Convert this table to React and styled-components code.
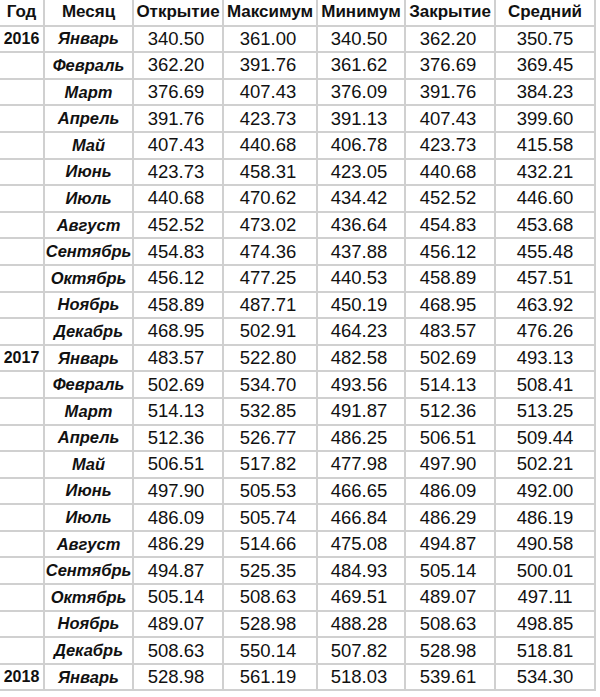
import React from "react";
import styled, { createGlobalStyle } from "styled-components";

const columns = ["Год", "Месяц", "Открытие", "Максимум", "Минимум", "Закрытие", "Средний"];

const rows = [
  ["2016", "Январь", "340.50", "361.00", "340.50", "362.20", "350.75"],
  ["", "Февраль", "362.20", "391.76", "361.62", "376.69", "369.45"],
  ["", "Март", "376.69", "407.43", "376.09", "391.76", "384.23"],
  ["", "Апрель", "391.76", "423.73", "391.13", "407.43", "399.60"],
  ["", "Май", "407.43", "440.68", "406.78", "423.73", "415.58"],
  ["", "Июнь", "423.73", "458.31", "423.05", "440.68", "432.21"],
  ["", "Июль", "440.68", "470.62", "434.42", "452.52", "446.60"],
  ["", "Август", "452.52", "473.02", "436.64", "454.83", "453.68"],
  ["", "Сентябрь", "454.83", "474.36", "437.88", "456.12", "455.48"],
  ["", "Октябрь", "456.12", "477.25", "440.53", "458.89", "457.51"],
  ["", "Ноябрь", "458.89", "487.71", "450.19", "468.95", "463.92"],
  ["", "Декабрь", "468.95", "502.91", "464.23", "483.57", "476.26"],
  ["2017", "Январь", "483.57", "522.80", "482.58", "502.69", "493.13"],
  ["", "Февраль", "502.69", "534.70", "493.56", "514.13", "508.41"],
  ["", "Март", "514.13", "532.85", "491.87", "512.36", "513.25"],
  ["", "Апрель", "512.36", "526.77", "486.25", "506.51", "509.44"],
  ["", "Май", "506.51", "517.82", "477.98", "497.90", "502.21"],
  ["", "Июнь", "497.90", "505.53", "466.65", "486.09", "492.00"],
  ["", "Июль", "486.09", "505.74", "466.84", "486.29", "486.19"],
  ["", "Август", "486.29", "514.66", "475.08", "494.87", "490.58"],
  ["", "Сентябрь", "494.87", "525.35", "484.93", "505.14", "500.01"],
  ["", "Октябрь", "505.14", "508.63", "469.51", "489.07", "497.11"],
  ["", "Ноябрь", "489.07", "528.98", "488.28", "508.63", "498.85"],
  ["", "Декабрь", "508.63", "550.14", "507.82", "528.98", "518.81"],
  ["2018", "Январь", "528.98", "561.19", "518.03", "539.61", "534.30"],
];

function App() {
  return (
    <>
      <GlobalStyle />
      <Table>
        {columns.map((name) => (
          <HeadCell key={name}>{name}</HeadCell>
        ))}
        {rows.map((row, i) =>
          row.map((value, j) => {
            if (j === 0) return <YearCell key={`${i}-${j}`}>{value}</YearCell>;
            if (j === 1) return <MonthCell key={`${i}-${j}`}>{value}</MonthCell>;
            return (
              <NumberCell key={`${i}-${j}`} $shift={j < 6}>
                {value}
              </NumberCell>
            );
          })
        )}
      </Table>
    </>
  );
}

const GlobalStyle = createGlobalStyle`
  html, body {
    margin: 0;
    padding: 0;
    background: #ffffff;
  }
  body {
    font-family: "Liberation Sans", Arial, sans-serif;
    color: #111111;
  }
`;

const Table = styled.div`
  display: grid;
  grid-template-columns: 45px 89px 90px 94px 88px 90px 100px;
  grid-auto-rows: 26.6px;
  width: 596px;
`;

const Cell = styled.div`
  display: flex;
  align-items: center;
  justify-content: center;
  border-right: 2px solid #d0d0d0;
  border-bottom: 2px solid #d0d0d0;
  white-space: nowrap;
  overflow: hidden;
`;

const HeadCell = styled(Cell)`
  font-size: 17px;
  font-weight: 700;
`;

const YearCell = styled(Cell)`
  font-size: 16px;
  font-weight: 700;
`;

const MonthCell = styled(Cell)`
  font-size: 16.5px;
  font-weight: 700;
  font-style: italic;
`;

const NumberCell = styled(Cell)`
  font-size: 18.5px;
  padding-right: ${(p) => (p.$shift ? "4px" : "0")};
`;

export default App;
